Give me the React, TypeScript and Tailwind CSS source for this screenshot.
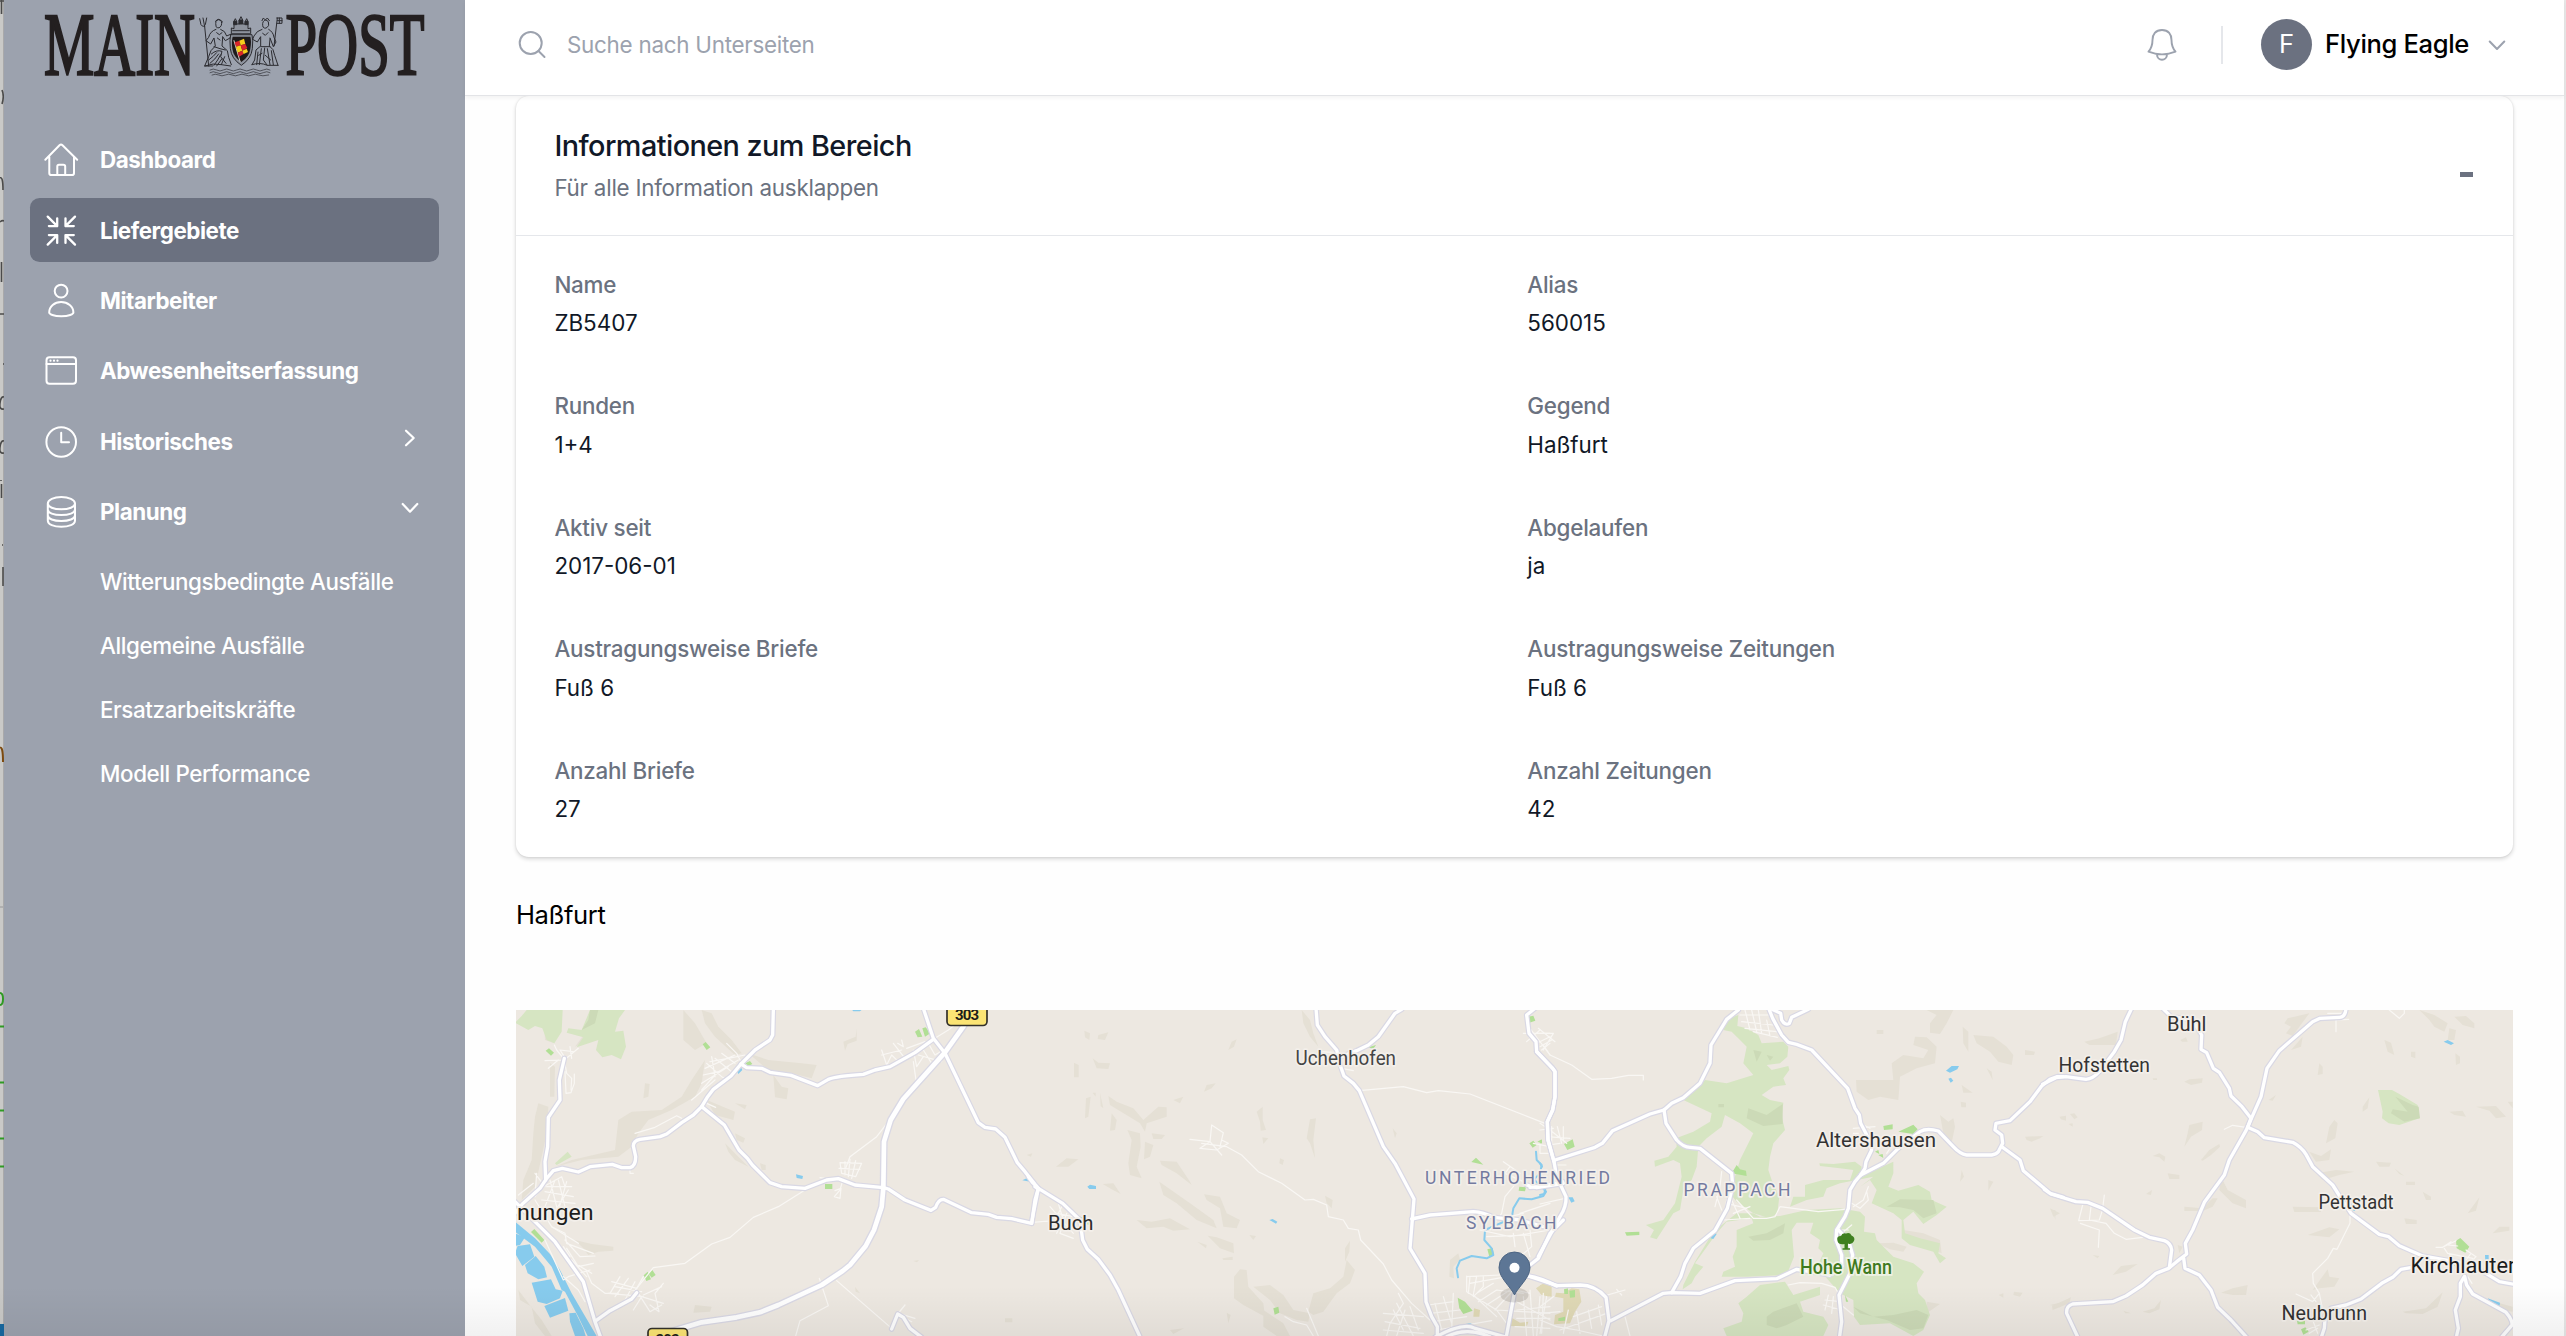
import React from "react";

type Tile = { x: number; hill: string[]; forest: string[]; dark: string[]; park: string[]; sand: string[]; water: string[]; stream: string[]; minor: string[]; road: string[]; highway: string[] };

/* Map geometry, split in four sheets. Each sheet is drawn at three units to the pixel. */
const tiles: Tile[] = [
  {
    x: 515,
    hill: [
      "M85 30H120L118 130L90 120ZM240 30L270 60L290 50L250 110L180 140L210 100Z",
      "M505 30L540 70L575 130L540 150L505 120ZM560 30L590 40L610 80L650 120L680 160L660 165L600 110L570 70Z",
      "M570 180L560 250L540 290L470 330L400 360L370 400L350 440L310 470L200 480L120 500L170 480L300 450L310 360L350 335L440 330L500 290L530 240Z",
      "M70 310L100 320L95 400L80 470L60 560L20 600L25 540L50 480L55 400L60 350Z",
      "M700 160L760 180L860 190L905 195L890 235L830 220L760 210ZM775 225L800 260L820 265L815 298L780 292Z",
      "M985 125L1022 110L1025 85V122L998 132L990 152ZM390 250L404 252L400 290L385 295Z",
      "M575 300L660 335L655 360L620 350L600 345ZM630 430L680 480L700 500L660 480L640 455ZM660 400L690 415L685 428L665 420ZM735 490L752 495V510H740ZM660 310L695 315L690 328Z",
      "M180 720L230 732L295 740V752L250 755L220 765L205 745ZM540 915L590 920L585 935L535 938Z",
      "M10 870L40 910L80 960L110 1008H90L60 970L50 920L15 900ZM105 190L120 200L118 290H105Z",
      "M1535 465L1552 460L1548 470ZM1195 783L1212 780L1206 787ZM1020 860L1035 880L1022 875ZM1470 955H1492V967H1470ZM1455 802L1468 812Z",
    ],
    forest: ["M0 68L20 48L35 30H143L140 95L118 130L95 120L82 85L60 78L40 90Z", "M225 30H330L312 55L300 95L325 92L333 140L318 178L290 165L262 172L243 150L250 120L185 142L205 112L155 98L160 85L200 90Z", "M120 490L158 455L170 470L125 495Z"],
    dark: ["M225 30H250L240 70L200 90L220 60Z"],
    park: ["M92 152L102 145L117 158L108 167ZM563 133L572 126L586 142L575 150ZM1200 95L1212 87L1222 110L1208 112ZM1222 85L1232 82L1246 100L1230 110ZM930 552H952V567H930ZM48 696L58 687L88 720L80 728ZM386 826L398 815L408 838L394 843ZM400 820L412 810L422 825L410 833ZM690 190L705 183L712 192L700 198Z"],
    sand: [],
    water: [
      "M0 665L60 715L105 762L135 810L170 880L205 940L245 1008H218L190 950L150 875L140 870L110 800L60 740L0 695Z",
      "M0 700L30 712L15 735L0 738ZM8 738L45 733L58 770L22 798L0 760Z",
      "M30 795L62 768L88 800L96 832L70 838L38 820Z",
      "M50 848L108 838L122 868L143 872L135 895L95 912L68 905Z",
      "M88 918L150 894L160 932L105 953Z",
      "M163 940L182 938L205 985L212 1008H180L165 965Z",
      "M665 212L678 202L682 210L670 222ZM843 523L864 528L862 537L845 534ZM1010 28H1042L1035 34H1015ZM1522 541L1538 533L1545 545Z",
    ],
    stream: [],
    minor: [
      "M118 135L125 150L148 178M90 182L148 180L190 145M100 205L130 180M165 140L170 175M148 170L135 150L175 155M150 215L153 280L168 278L178 250V222M148 180L155 220L170 235L168 270",
      "M575 190L620 230L640 240M600 175L650 215M570 205L660 165M565 225L610 215L670 180M590 170L600 230M620 160L660 190M560 250L640 200M530 300L600 240M635 130L665 160L680 190M560 270L600 225M585 185L640 175L690 165",
      "M360 400L420 382L485 347L500 355M575 310L602 322M1130 352L1085 410L1005 470L992 505",
      "M1100 150L1115 195L1130 165L1150 185M1100 165L1160 150M1135 130L1170 175M1160 120L1165 140L1148 130M1175 145L1230 125M1195 150L1205 200L1225 170M1225 150L1250 190M1210 165L1280 185M1255 118L1300 90L1345 55M1195 185L1203 240M1240 130L1260 165L1285 150",
      "M975 488L1040 490L1022 530L980 520ZM990 485V525M1005 478L1000 530M1022 482L1010 535M972 505L1035 508M985 535L975 570L958 590L975 595L978 565L960 572M915 533L960 540",
      "M870 570L790 620L715 652L645 712L590 732L510 790L415 803L365 865L350 890",
      "M290 845L365 865M315 830L285 880M340 835L300 890M280 880L385 890M300 860L380 875M360 845L330 900M385 830L340 910M445 850L420 880L432 935L405 915M355 930L380 890L445 910M370 880L405 935L440 915M385 885L440 860",
      "M85 560L140 530L150 560M75 570L60 590L65 520M60 520L90 560M10 585L55 550M95 560L170 560M90 575L175 590M80 600L180 610M105 540L130 640M130 540L150 620M155 545L125 650M60 600L110 680L190 730M160 570L110 650M120 540L90 620",
      "M110 680L150 700L155 730L235 760M150 720L195 770L240 768M155 745L190 800L235 790M170 780L215 830M145 740L165 770M90 720L145 840L160 830L225 810M215 815L230 850L270 880L310 880M145 830L190 870L210 905M180 790L230 820",
      "M965 842L1130 985M913 835L940 917L855 962L842 1008M1148 942L1170 915M1150 940L1200 955M1160 950L1190 965M345 505V520H355",
    ],
    road: [
      "M775 30L773 105L765 120L720 150L678 192L648 228L595 268L578 290L560 320L535 345L500 368L455 402L435 410L375 418Q355 422 355 438L362 470Q362 498 345 503L320 503L292 493L225 500L190 516L142 505L115 512L95 535L75 565L22 612L0 640",
      "M148 175L133 240L135 300L100 352L98 440L90 485L92 540",
      "M678 192L695 203L740 205L765 217L828 226L908 257L940 238Q965 228 1045 223L1080 210L1125 200L1200 158L1255 118",
      "M1225 25L1255 115L1290 160L1390 368L1410 382L1442 387L1470 412L1507 488L1530 515L1560 553L1570 565",
      "M560 320L628 375L672 450L698 476L712 495L765 548L800 560L870 565L935 540L970 536L1020 555L1105 563L1120 567L1170 600L1248 631L1262 622Q1270 598 1285 598L1370 638L1420 643L1445 652L1490 656L1550 670L1560 600L1570 565",
      "M0 605L120 725L205 845L218 890L240 965L258 1015",
      "M365 878L350 897L285 932L243 962",
      "M1130 987L1148 942L1165 952L1185 985L1220 1012",
    ],
    highway: ["M1375 25L1345 80L1290 157L1165 297L1127 360L1107 425L1105 565L1100 620L1077 690L1052 738L1005 795L983 813L920 855L790 915L735 937L665 952L560 967L500 985L400 1015"],
  },
  {
    x: 1030,
    hill: [
      "M163 92L180 100L178 120L165 112ZM205 105L235 97L225 120L203 117ZM188 175L205 188L240 190L235 207L200 205ZM132 188L146 195V232H132ZM168 295L182 290L175 350L165 355ZM210 278L220 325L212 318ZM188 278H197V290Z",
      "M235 288L260 305L310 325L340 360L385 320L410 322V350L350 370L345 395L330 370L240 315ZM245 340L260 360L255 390L240 392ZM292 390L330 400L332 440L320 500L335 535L300 525L295 490L305 420Z",
      "M345 425L370 435L360 470L342 478ZM365 400L405 405L395 417H370ZM390 482L440 485L480 545L485 555L440 520L395 495ZM388 545L480 610L550 660L560 685L500 660L440 610L400 585Z",
      "M522 583L570 590L590 640L630 660L620 685L580 680L570 625L530 600ZM218 552L250 550L272 582L245 568ZM78 500L110 475L145 478L115 500ZM320 660L365 665L420 655L480 688L430 692L400 680L350 685Z",
      "M533 707L560 712L610 730L612 760L570 745ZM502 725L530 735L528 745ZM577 775L608 770V780H580ZM680 335L698 320V360L708 390L692 392L690 365ZM840 358L858 355L850 420L855 475L840 430L830 415ZM697 412L715 415L700 432ZM750 475L762 480L758 495L748 490Z",
      "M815 30L840 60L850 100L865 140L840 110L820 70ZM522 275L530 255L557 250L545 265ZM430 300L460 290L450 310ZM1088 385L1100 400L1095 415ZM885 587L908 600L905 625L890 610ZM595 150L605 125L620 118L612 140Z",
      "M612 830L630 808L650 810L655 860L700 910L705 950L640 915L612 895ZM670 860L720 855L760 885L790 930L840 940L835 965L800 960L750 940L720 900ZM700 930L760 970L780 1008H740L700 980Z",
      "M835 935L850 880L900 865L940 830L950 780L975 810L960 850L920 880L880 935L850 945ZM945 745L960 722L958 755L945 785ZM658 705L678 708L670 720ZM1260 780L1285 760L1290 780L1270 800L1272 835L1258 830ZM590 938L602 945L595 970ZM420 990L462 985L430 1002Z",
    ],
    forest: [],
    dark: [],
    park: ["M1498 430L1510 422L1520 435L1508 443ZM1522 425L1535 418V430ZM1468 560L1488 562L1485 574L1466 572ZM1324 486L1338 473L1360 494ZM1495 50L1510 47L1516 62L1498 68ZM730 925L745 920L748 938L734 944ZM1372 748L1388 744L1392 765L1378 770ZM1283 893L1305 905L1328 932L1300 942L1288 925ZM1015 142L1038 135L1030 147ZM150 650L175 655L180 675L155 670Z"],
    sand: ["M1332 925L1350 930L1348 950H1330ZM1440 950L1470 968L1495 965L1490 980L1440 978ZM1518 865L1540 850L1565 855V890L1535 885Z"],
    water: ["M172 560L180 554L198 558V567H178ZM718 660L728 657L742 665L738 671Z"],
    stream: ["M1518 455L1520 480L1535 495L1530 520L1512 538L1548 575L1540 588L1505 598L1468 595L1450 625L1445 655L1365 690L1363 720L1385 745L1390 765L1370 775L1325 768L1290 782L1280 805L1284 832", "M1282 980L1322 972"],
    minor: [
      "M988 272L1120 260L1190 278L1225 272L1320 282L1545 370M480 418L540 425L510 445L560 450L595 430L575 420M545 375L580 398L570 440M545 375L540 425L575 465M515 430L590 440L635 465L685 515L755 550L825 600L850 598L890 615L895 650L940 660L955 685L985 690L992 720L1060 792L1085 840L1145 910L1200 960",
      "M85 610L100 660L80 700M80 640L130 650M95 620L60 690M110 640L90 700L130 715M0 668L90 660M60 620L130 700",
      "M1105 880L1120 910L1080 970L1070 1008M1060 940L1180 950M1065 965L1170 985M1060 990L1180 1000M1100 910L1150 1008M1125 930L1100 1008M1090 930L1120 990M1140 920L1165 990",
      "M1195 915L1270 905M1200 940L1290 930M1210 965L1310 950M1215 910L1235 990M1240 890L1265 970M1270 880L1265 990M1220 990L1385 962",
      "M1310 828V875L1400 930L1560 940M1310 830L1410 825M1320 830L1315 880M1340 828L1330 885L1400 950M1360 830V860L1330 890M1320 850L1430 830M1345 905L1400 870L1480 880M1370 915L1440 870M1395 930L1450 870M1340 880L1390 850M1400 930L1430 970",
      "M1460 905L1560 960M1480 890L1490 1008M1500 870L1510 1008M1530 890L1520 1008M1460 930L1560 920M1455 980L1560 985M1540 880L1535 1000M1455 870L1500 880M1460 955H1560",
      "M1420 485L1470 520L1450 560L1425 590L1415 640L1380 690M1440 500L1425 520L1480 545L1500 560M1350 690L1440 710L1560 690M1370 710L1500 705M1450 700L1455 740M1480 700L1500 770M1500 690L1505 740L1470 770M1470 640L1560 610M1440 650L1480 640",
      "M1480 100L1560 100M1500 85L1560 165M1490 125L1530 90M1520 130L1560 110M1535 150L1560 130M935 205L970 212M870 155L920 158M1530 435V460H1560M1510 430L1560 440M765 950L790 965L830 975L850 1008M830 925L865 1008",
    ],
    road: [
      "M15 560L25 567M-5 530L8 548L25 565L98 610L150 660L158 720L172 748L205 778L240 825L265 870L332 1015M25 565L10 640L5 670",
      "M858 25L862 75L885 110L920 150L932 200L942 228L970 250L988 272L1060 440L1095 490L1152 597L1140 745L1185 820L1188 905L1205 950L1222 980V1015",
      "M1115 28L1095 40L1045 110L1015 135L980 152L935 170",
      "M1145 657L1200 645L1330 635Q1360 637 1390 652L1470 660L1540 680",
      "M1515 25L1490 45L1497 100L1518 125L1520 155L1568 205L1575 215V290L1568 330L1552 365L1554 420L1572 485",
      "M1490 555L1520 563L1600 550",
      "M1600 660L1560 700L1525 775L1500 795",
      "M1452 885L1428 1015",
      "M1495 828Q1530 833 1580 858",
      "M1215 1012Q1300 965 1335 985L1430 1012M1250 1010Q1310 980 1380 1010",
    ],
    highway: [],
  },
  {
    x: 1540,
    hill: [
      "M1160 30H1240L1220 70L1200 102L1170 98V70L1190 45ZM1125 110L1160 112L1190 140L1185 190L1130 205L1080 230L1075 300L1020 290L985 300L950 275L948 240L975 240L1060 240L1055 190L1090 165L1150 175L1165 150L1120 135Z",
      "M1300 105L1360 110L1400 140L1420 165L1415 195L1375 185L1350 155L1310 130ZM1268 80L1285 95V155L1270 130ZM1455 150L1485 155L1482 165H1455ZM1265 255L1298 278H1270ZM1340 205L1355 215L1358 240ZM1200 345L1225 365L1240 355L1245 380L1235 428L1210 400ZM1262 305L1278 308V322H1264Z",
      "M1010 90H1030V102H1010ZM1455 410L1510 408L1500 415L1475 425L1460 420ZM1345 540L1360 545L1345 572ZM1265 510L1272 530L1260 545ZM1530 625L1560 640L1540 650Z",
      "M1010 730L1060 728L1100 740L1090 755L1050 748ZM1090 690L1150 700L1200 720L1205 760L1180 750L1130 725L1095 720ZM1422 875L1448 878L1440 890L1420 885ZM1376 885L1390 880V893ZM1160 905L1200 912L1160 940ZM1530 915L1560 908V922Z",
    ],
    forest: [
      "M595 45L592 78L620 85L655 105L665 130L730 125L745 140L742 170L720 190L680 195L695 210L745 198L748 210L730 235L738 255L700 260L665 285L690 300L730 308L725 350L735 390L700 430L690 470L685 510L695 540L718 590L712 640L690 655L640 640L590 605L570 580L600 480L640 400L600 370L555 345L545 380L500 415L475 440L470 500L455 540L430 570L420 630L400 640L350 718L330 712L342 690L318 675L370 660L405 610L425 530L420 490L400 480L345 500L343 482L385 470L410 440L408 415L460 395L510 365L515 340L430 300L495 240L560 250L640 225L610 190L620 140L600 120L575 95L550 90L560 58Z",
      "M838 490L880 492L945 485L965 500L960 530L1060 485L1060 520L1045 560L1075 572L1135 555L1170 575L1175 600L1220 620L1190 645L1150 672L1120 635L1090 660L1095 700L1140 715L1200 730L1195 760L1218 775L1200 790L1180 755L1110 735L1085 715L1085 660L1060 640L995 610L1010 570L990 540L960 560L1000 530L900 550L860 565L850 590L800 600L750 620L760 590L795 590L795 555L850 540L930 540L940 510L900 505L840 498Z",
      "M720 648L800 630L900 625L960 635L975 650L972 695L1005 700L1010 720L1060 770L1120 790L1152 815L1130 850L1135 880L1155 900L1170 945L1150 990L1120 1008L1050 970L960 975L942 950L940 900L900 880L860 835L838 785L850 760L835 745L840 720L810 700L820 668L770 668L755 690L762 770L740 825L620 830L545 830L550 815L585 800L578 770L590 740L590 690L640 670L635 655L560 665L530 700L465 790L490 800L465 830L455 850L428 868L430 855L465 785L520 695L590 640L640 640L660 650Z",
      "M550 985L605 965L610 940L595 910L620 890L660 855L735 845L760 885L840 860L840 885L780 905L790 935L850 950L865 975L850 1008H560Z",
    ],
    dark: [
      "M625 325L680 345L728 312V372L670 378L620 355ZM625 710L680 700L735 670L730 700L690 720L640 722ZM680 950L700 935L770 910L790 950L740 975L710 985L680 975ZM940 920L1000 950L1060 945L1130 930L1165 945L1150 985L1110 990L1040 960L960 940Z",
      "M1040 620L1080 598L1180 600L1190 640L1150 655L1120 630L1080 622ZM535 312H552V322H535ZM640 150L665 155L650 185ZM680 165L700 170L690 182Z",
    ],
    park: ["M72 432L98 418L104 440L82 450ZM255 697L298 695V705L260 707ZM575 520L590 495L600 508L618 512L620 528ZM1030 378L1058 373V388L1032 390ZM1075 395L1120 374L1133 388L1120 402ZM1005 455L1015 450L1018 462ZM1015 465L1028 462L1030 474ZM72 868L84 865V882H73ZM88 872L105 870V892L90 893ZM55 955L75 950V962L55 963ZM915 885L925 905H918ZM0 420H6V430H0Z"],
    sand: ["M95 865L118 868L124 905L105 935L90 970L42 973L45 945L70 935V895L45 890L48 878L70 880ZM0 855L32 855L25 890L0 880Z"],
    water: ["M1218 212L1235 198L1257 198L1252 208L1230 218ZM1225 236L1233 233L1240 242L1232 248ZM85 592L98 592L104 604L94 608ZM512 715L522 698L530 702L520 717Z"],
    stream: ["M0 585L12 582L16 570M0 490L6 500"],
    minor: [
      "M-10 100L40 100L10 150M-5 85L45 125M10 135L30 165L95 195L155 238L215 235L265 226H310V240M0 140L35 120",
      "M600 45L690 45M605 65L700 75M615 85L710 95M640 95L712 112M615 30L630 90M635 30L650 95M655 30L665 100M680 60L690 108",
      "M0 370L30 390L80 430M35 380V430M52 380L65 430M20 410L90 415M25 435L60 430M45 495H78M0 612L75 595M70 380V420M0 390L40 385",
      "M545 515L540 560L525 620M560 600L550 660L630 655M575 600L600 655M590 600L640 655L680 655L705 650L720 620L835 635L915 628M530 590L545 630M560 610L620 625M580 640L630 620",
      "M985 560L970 600L940 620M980 575L985 600L960 625L935 610M905 700L935 675M905 690L925 690M940 385L1005 380M955 400L940 400M0 940L60 935M0 960L50 980L110 990L190 1008M20 890L0 1000M110 935L120 1000M145 930L155 985M175 915L185 975M100 950L185 920M60 990L200 940M185 890L255 870M230 868L245 885M255 950L270 1008M85 930L70 1000",
      "M745 855L780 848L845 850L885 862L895 880M865 885L855 930M880 890L875 940M855 900L900 905M850 915L905 930M910 920L940 945M905 890V930M1060 430L1040 460M960 370L990 385M0 920L40 890",
    ],
    road: [
      "M-10 155L38 205L45 215V290L38 330L22 365L24 420L42 485L50 530L78 590Q80 620 60 650L-5 770",
      "M-30 562L0 560L68 545",
      "M-35 828L52 857L120 855Q165 855 198 892L207 962L193 1015",
      "M45 480L165 442L187 430L218 392L330 342L372 330L395 310L430 293L480 250L510 190L513 135L560 58L595 30",
      "M372 330L378 370L410 420Q430 442 450 442L480 445L575 520L578 560L562 625L525 692L460 745L435 790L422 830L395 878",
      "M212 962L370 880L395 878L480 880L585 842L710 836L770 808L870 825L905 798",
      "M686 25L698 55L725 105L745 127L770 133L815 150L923 265L945 325L958 345L962 370L988 420L995 450L978 485L975 505L962 525",
      "M1075 445L1030 490L962 525L945 545L930 570L925 625L915 650L890 690L888 720L905 765L905 800",
      "M690 25L722 40L725 60Q735 78 748 70L755 52L805 28",
      "M895 690L925 720L938 765L930 820L897 885L905 965L898 1015",
      "M1075 445L1140 395Q1160 383 1195 393L1240 440Q1260 462 1280 465L1355 465Q1370 462 1375 455L1388 430L1385 405L1365 390L1368 370L1410 362L1470 305L1505 258L1530 238L1552 230H1570",
      "M1385 440L1440 480L1450 512L1530 580L1570 592",
    ],
    highway: [],
  },
  {
    x: 2046,
    hill: [
      "M115 125L160 115L215 95L210 135L130 135ZM403 120L420 112L425 125H408ZM415 245L430 238L470 235L468 248L435 255ZM320 235H333V240H322ZM40 350L60 347V362L45 358ZM72 342L85 340L95 352L85 358ZM68 372L80 370V380Z",
      "M725 55L790 40L760 80L740 108L720 100L735 80L715 70ZM770 110L765 140L735 150ZM1120 30L1165 45L1205 70L1195 95L1165 80L1150 60ZM1210 85L1230 90L1225 120L1205 120ZM1225 50L1260 48L1285 70V85L1250 75ZM1015 120L1035 128L1045 165L1025 155ZM1228 160L1242 170V190L1230 195ZM1095 155L1108 155V175L1095 170ZM820 190L830 200V222L815 225Z",
      "M415 440L425 400L430 375L470 365L468 390L435 410ZM465 480L490 450L520 432L522 440L495 465L470 482ZM320 468L340 460L358 470L355 485L340 472ZM525 530L545 570L600 600V625L560 610L520 570ZM365 520L400 525V537H370ZM300 582L318 570L315 585ZM415 620L470 625L500 595H515L500 620L470 633H415Z",
      "M840 430L850 380L865 360L875 370L868 415ZM790 455L825 468L855 448L850 480L810 485ZM810 520L870 510L925 515L880 525L830 540ZM990 485L1035 488L1030 500H1000ZM1045 505L1075 528L1060 522ZM950 320L970 292L965 325L950 335ZM668 300L690 285L680 302ZM1130 575L1155 590V600H1140ZM1265 640L1300 592L1290 632ZM740 620L825 622V636H745ZM785 705L850 682L880 688L850 712Z",
      "M525 878L560 865L605 855L600 885L560 885ZM200 825L225 798L275 792L240 815ZM18 918L75 892L70 910L20 930ZM800 870L845 808L850 830L880 835L865 860L820 865ZM1070 935L1140 925L1190 877L1175 920L1130 942L1080 940ZM1340 700L1360 680L1390 680V692ZM1210 335L1250 332L1260 350L1225 345ZM1290 320L1350 318L1380 350L1350 355L1330 332ZM1385 305H1400V325Z",
      "M232 932L255 940H238ZM290 935L325 925L345 900L340 928L310 940ZM395 735L410 740L400 760ZM140 765L160 768L155 775ZM20 630H28V660ZM1080 545H1107V555H1080ZM1075 655L1112 660V672H1080ZM1345 905L1400 920V935L1360 928Z",
    ],
    forest: ["M996 270H1038L1060 282L1115 315L1120 355L1060 375L1028 370L1008 355L1010 335Z"],
    dark: ["M1048 290L1100 315L1118 320L1122 355L1075 365L1035 340L1040 328L1085 335Z"],
    park: ["M1230 722L1243 714L1270 740L1258 758L1232 745ZM753 962H777V973H755ZM765 988L778 982L788 995L772 1004ZM1225 795L1240 800L1230 808Z"],
    sand: ["M1232 735L1248 740L1240 752Z"],
    water: ["M1193 125L1205 120L1224 130L1215 135ZM1317 765H1328V785L1318 788ZM1325 895L1362 908L1360 922L1335 912Z"],
    stream: ["M925 630L905 600"],
    minor: [
      "M535 388L560 376L605 383M175 585L170 625M110 615L98 662L160 660L170 628M135 620L130 660L180 670L205 700L240 718L290 712M103 670L160 690L157 742M1030 30L1060 55L1075 40V30M870 55V95M870 60L908 58M845 40H890",
      "M912 645V670L873 748L862 745L845 775L800 820L802 850L820 880L832 940M750 882L800 905L820 880M795 885L810 905M1170 742H1190L1230 722M1190 742L1215 725M1195 745L1205 760L1280 775M1210 760L1215 785M1260 750L1290 770M1275 760L1260 780M1205 735L1235 738M1290 770L1270 790M1265 830L1278 850",
      "M800 960L815 1000M780 990L820 975M790 1000L815 985",
    ],
    road: [
      "M-10 253L30 233L60 230L120 238Q140 237 160 215L205 155L225 120L238 65L257 25",
      "M350 25L375 50L440 60L467 105L465 148L482 158L502 205L520 217L550 265L555 288L588 320L615 355L605 382",
      "M900 25Q898 52 880 52L822 55L800 65L700 152L663 205L645 290L600 392L550 480L535 525L475 607L440 690L418 730L422 762L392 785L368 805L330 820L290 855L240 888L200 905L80 912Q60 918 62 940L97 1015",
      "M605 382L635 395L655 413L740 427Q765 440 780 463L800 500L860 555L882 590L915 640L1000 703L1028 710L1060 737L1130 768L1210 782L1255 790L1320 820L1360 845L1405 853",
      "M-5 568L15 582L90 605L125 607L170 625L265 690L310 712L355 722Q375 730 377 750L370 803",
      "M413 775L417 805L460 825L495 870L515 922L555 960L605 1015",
      "M1110 800L1065 808L1040 832L1010 848L945 897L900 915L855 925",
      "M838 945L835 985L825 1015",
      "M1255 830L1243 850V890L1228 930L1237 985L1230 1015",
      "M1256 830L1262 855L1280 882L1380 937Q1400 960 1398 975L1368 1010",
    ],
    highway: [],
  },
];

const layer = (key: keyof Omit<Tile, "x">, props: React.SVGProps<SVGPathElement>) =>
  tiles.map((t) => (
    <g key={t.x} transform={`translate(${t.x} 1000) scale(0.333333)`}>
      {t[key].map((d, i) => (
        <path key={i} d={d} strokeLinejoin="round" strokeLinecap="round" {...props} />
      ))}
    </g>
  ));

const places = [
  { t: "nungen", x: 517, y: 1219.5, w: 76.5, s: 22.5, c: "#1c1c1c" },
  { t: "Uchenhofen", x: 1295.5, y: 1064.5, w: 100.5, s: 20, c: "#444444" },
  { t: "Buch", x: 1048, y: 1230, w: 45.5, s: 20.5, c: "#2c2c2c" },
  { t: "Altershausen", x: 1816, y: 1147, w: 120, s: 20.5, c: "#333333" },
  { t: "Hofstetten", x: 2058.5, y: 1072, w: 91.5, s: 20, c: "#333333" },
  { t: "Bühl", x: 2167, y: 1031, w: 39.5, s: 20, c: "#333333" },
  { t: "Pettstadt", x: 2318.5, y: 1208.5, w: 75, s: 20, c: "#333333" },
  { t: "Neubrunn", x: 2281.5, y: 1319.5, w: 85.5, s: 20, c: "#333333" },
  { t: "Kirchlauter", x: 2410.5, y: 1273, w: 105, s: 21.5, c: "#1c1c1c" },
  { t: "UNTERHOHENRIED", x: 1425, y: 1183.5, w: 185, s: 17.5, c: "#737a9f", sp: true },
  { t: "SYLBACH", x: 1466, y: 1229, w: 90.5, s: 17.5, c: "#737a9f", sp: true },
  { t: "PRAPPACH", x: 1683.5, y: 1196, w: 107, s: 17.5, c: "#737a9f", sp: true },
];

function MapView() {
  return (
    <svg className="block h-[326px] w-full" viewBox="516 1010 1997 326" preserveAspectRatio="none">
      <rect x="516" y="1010" width="1997" height="326" fill="#ede8e1" />
      {layer("hill", { fill: "#e5e0d5" })}
      {layer("forest", { fill: "#d6e5c2" })}
      {layer("dark", { fill: "#ccdab7" })}
      {layer("sand", { fill: "#e0d9b6" })}
      {layer("park", { fill: "#b1df95" })}
      {layer("water", { fill: "#87cbed" })}
      {layer("stream", { fill: "none", stroke: "#87cbed", strokeWidth: 6 })}
      {layer("minor", { fill: "none", stroke: "#f9f7f4", strokeWidth: 3.6 })}
      {layer("road", { fill: "none", stroke: "#d9d8e4", strokeWidth: 17 })}
      {layer("highway", { fill: "none", stroke: "#d9d8e4", strokeWidth: 22 })}
      {layer("road", { fill: "none", stroke: "#ffffff", strokeWidth: 10 })}
      {layer("highway", { fill: "none", stroke: "#ffffff", strokeWidth: 14 })}
      <g fontFamily="Roboto, 'Liberation Sans', sans-serif" fontWeight="400">
        {places.map((p) => (
          <text key={p.t} x={p.x} y={p.y} fontSize={p.s} fill={p.c} textLength={p.w} lengthAdjust={p.sp ? "spacing" : "spacingAndGlyphs"} stroke="#f3efea" strokeWidth="3.5" strokeLinejoin="round" paintOrder="stroke">
            {p.t}
          </text>
        ))}
        <text x="1800" y="1274" fontSize="19.5" fontWeight="500" fill="#3f7a20" textLength="92" lengthAdjust="spacingAndGlyphs" stroke="#eef2e4" strokeWidth="3.5" paintOrder="stroke">
          Hohe Wann
        </text>
      </g>
      {/* nature reserve tree */}
      <path d="M1837.500 1241 Q1836 1236 1841 1236 Q1842 1232.500 1846 1233.500 Q1850 1232 1851.500 1235.500 Q1855.500 1237 1854 1241 Q1851.500 1245.500 1848 1243.500 L1847.800 1248.300 H1850 V1249.800 H1842.500 V1248.300 H1844.500 V1244 Q1838.500 1245 1837.500 1241Z" fill="#3f8020" />
      {/* road shields */}
      <g fontFamily="Roboto, sans-serif" fontWeight="700" fontSize="15" fill="#1e1e1a" textAnchor="middle">
        <rect x="947" y="1001" width="40" height="24.500" rx="4" fill="#fbe474" stroke="#33312a" strokeWidth="1.700" />
        <text x="967" y="1020" textLength="24" lengthAdjust="spacing">303</text>
        <rect x="648" y="1328.500" width="39.500" height="24" rx="4" fill="#fbe474" stroke="#33312a" strokeWidth="1.700" />
        <text x="667.500" y="1344.500" textLength="24" lengthAdjust="spacing">303</text>
      </g>
      {/* marker */}
      <ellipse cx="1514.500" cy="1295" rx="14" ry="7.500" fill="#55504a" opacity=".18" />
      <path d="M1514.500 1295 C1511 1287 1499 1278 1499 1267.500 A15.500 15.500 0 0 1 1530 1267.500 C1530 1278 1518 1287 1514.500 1295Z" fill="#5d7695" stroke="#4d6583" strokeWidth="1" />
      <circle cx="1514.500" cy="1267.700" r="5" fill="#fff" />
    </svg>
  );
}

function Logo() {
  return (
    <svg className="block h-[68px] w-[392px]" viewBox="40 12 392 68">
      <g fontFamily="'Liberation Serif', serif" fontSize="88" fill="#231f20" stroke="#231f20" strokeWidth="2.400">
        <text x="44" y="74" textLength="151" lengthAdjust="spacingAndGlyphs">MAIN</text>
        <text x="285.500" y="74" textLength="139" lengthAdjust="spacingAndGlyphs">POST</text>
      </g>
      <g transform="translate(190 10) scale(.333333)" fill="none" stroke="#2b2b30" strokeWidth="3" strokeLinecap="round" strokeLinejoin="round">
        {/* trident */}
        <path d="M29 26L33 44Q40 54 46 44L50 24M39 24L44 50M44 50L56 168" />
        {/* left figure */}
        <path d="M78 48Q74 30 86 28Q98 32 94 46Q88 58 80 52ZM76 34Q86 22 98 36M78 58Q60 64 56 82L48 92L62 102L72 84L76 108Q60 120 56 140L44 168H68M92 58Q106 62 110 78L124 72L120 84L106 92L98 80M98 82L96 108L112 122L116 142L124 164M72 110L90 116L106 120M64 132Q80 118 96 124L92 140L108 160M56 150Q70 140 80 128M60 160Q76 148 86 132M72 166Q84 150 92 134M80 168L96 146M94 164L104 140M44 168Q70 158 94 164L122 168M80 68L88 74L96 68M82 84L90 90" />
        {/* right figure */}
        <path d="M218 46Q216 32 228 30Q238 32 236 46Q228 60 220 52ZM216 32L220 24L226 30L232 24L238 32M216 58Q200 62 192 78L188 88L202 96L212 80L212 108L198 120L194 150L186 164M236 58Q250 66 252 82L258 96L250 110L240 84M240 86L238 108Q252 116 254 136L264 166M212 110L240 110M204 126L200 164M214 116L208 164M224 114L220 150L232 166M232 116L240 164M244 122L250 164M186 164Q210 156 232 166H264M218 70L226 76L234 68M206 136L216 130M226 136L242 150" />
        {/* staff with banner */}
        <path d="M252 108L262 24M260 24H276V40H261M268 24V40M262 32H276" />
        {/* castle crown */}
        <path d="M124 70V54L132 56V34L136 26L140 34V42H148V30L153 20L158 30V42H166V34L170 26L174 34V56L182 54V70Z" fill="#8d929d" />
        <path d="M132 34H140V44H132ZM148 30H158V42H148ZM166 34H174V44H166Z" fill="#2b2b30" />
        <path d="M128 62H178" />
        {/* shield */}
        <path d="M122 74H186Q190 90 187 116Q184 146 154 166Q124 146 121 116Q118 90 122 74Z" fill="#8d929d" />
        <path d="M128 80H181Q185 94 181 116Q178 140 154 156Q130 140 127 116Q124 94 128 80Z" fill="#1f1b1c" stroke="none" />
        <path d="M132 92L150 154" stroke="#d5d3cc" strokeWidth="3" />
        <g stroke="none">
          <path d="M134 97L148 92L152 106L138 110Z" fill="#d9262b" />
          <path d="M148 92L162 86L166 102L152 106Z" fill="#f7cf1d" />
          <path d="M138 110L152 106L157 122L143 128Z" fill="#f7cf1d" />
          <path d="M152 106L166 102L172 114L157 122Z" fill="#d9262b" />
          <path d="M143 128L157 122L161 132L147 140Z" fill="#d9262b" />
          <path d="M157 122L170 116L174 126L161 132Z" fill="#f7cf1d" />
        </g>
        <path d="M60 180Q70 174 80 180T100 180T120 180T140 180T160 180T180 180T200 180T220 180T240 180M60 188Q70 182 80 188T100 188T120 188T140 188T160 188T180 188T200 188T220 188T240 188M66 195Q76 190 86 195T106 195T126 195T146 195T166 195T186 195T206 195T236 195" strokeWidth="2" />
      </g>
    </svg>
  );
}

const Icon = ({ children }: { children: React.ReactNode }) => (
  <svg className="mr-[19px] block h-10 w-10 shrink-0" viewBox="0 0 40 40" fill="none" stroke="white" strokeWidth="2" strokeLinecap="round" strokeLinejoin="round">
    {children}
  </svg>
);

const icons = {
  home: <path d="M4.300 19.700L18.500 5.200Q20 3.700 21.500 5.200L36.200 19.700M8.300 17V33.200Q8.300 35 10.300 35H31Q33 35 33 33.200V17M16.300 34.500V26.500Q16.300 24.700 18 24.700H22.400Q24.200 24.700 24.200 26.500V34.500" />,
  shrink: <path d="M6.700 6.600L16.200 16.100M16.200 8.300V16.100H7.900M34 6.600L24.500 16.100M24.500 8.300V16.100H32.800M6.700 34.600L16.200 25.100M16.200 32.900V25.100H7.900M34 34.600L24.500 25.100M24.500 32.900V25.100H32.800" strokeWidth="2.300" />,
  person: <path d="M26.500 10.100A6.400 6.400 0 1 1 13.700 10.100A6.400 6.400 0 1 1 26.500 10.100ZM8.200 31.600C8.200 25.500 13.500 21.100 20.100 21.100S32.400 25.500 32.400 31.600C32.400 33.200 28 35.300 20.300 35.300S8.200 33.200 8.200 31.600Z" />,
  window: (
    <>
      <rect x="5.500" y="6.200" width="29.500" height="26.500" rx="3" />
      <path d="M5.500 13.100H35" />
      <path d="M9.500 9.700H9.510M13 9.700H13.010M16.500 9.700H16.510" strokeWidth="2.200" />
    </>
  ),
  clock: <path d="M35 20A14.800 14.800 0 1 1 5.400 20A14.800 14.800 0 1 1 35 20ZM20.200 10.800V20.200H28" />,
  db: <path d="M34 11.500C34 15 27.800 17.300 20.300 17.300S6.800 15 6.800 11.500S12.800 5 20.300 5S34 8 34 11.500V28.500C34 32.500 27.800 34.800 20.300 34.800S6.800 32.500 6.800 28.500V11.500M6.800 17.500C6.800 21 12.800 23 20.300 23S34 21 34 17.500M6.800 23.300C6.800 27 12.800 29 20.300 29S34 27 34 23.300" />,
};

type Item = { label: string; icon: React.ReactNode; active?: boolean; open?: boolean };
const nav: Item[] = [
  { label: "Dashboard", icon: icons.home },
  { label: "Liefergebiete", icon: icons.shrink, active: true },
  { label: "Mitarbeiter", icon: icons.person },
  { label: "Abwesenheitserfassung", icon: icons.window },
  { label: "Historisches", icon: icons.clock, open: false },
  { label: "Planung", icon: icons.db, open: true },
];
const sub = ["Witterungsbedingte Ausfälle", "Allgemeine Ausfälle", "Ersatzarbeitskräfte", "Modell Performance"];

const fields = [
  ["Name", "ZB5407"], ["Alias", "560015"],
  ["Runden", "1+4"], ["Gegend", "Haßfurt"],
  ["Aktiv seit", "2017-06-01"], ["Abgelaufen", "ja"],
  ["Austragungsweise Briefe", "Fuß 6"], ["Austragungsweise Zeitungen", "Fuß 6"],
  ["Anzahl Briefe", "27"], ["Anzahl Zeitungen", "42"],
];

export default function App() {
  return (
    <div className="relative flex h-[1336px] w-[2566px] overflow-hidden bg-[#fefefe] font-['Inter','Liberation_Sans',sans-serif]">
      <div className="w-1 shrink-0 bg-[#c9c9c7]">
        <svg className="block h-[1336px] w-1" viewBox="0 0 4 1336" fill="none" stroke="#4b4b4b" strokeWidth="1.600">
          <path d="M3.500 0V1336" stroke="#a9a9aa" strokeWidth="1" />
          <path d="M0 1H4M1.500 0V14M2 90Q4.500 96 2 104M0 178Q3 176 3 190M0 222Q2 220 4 221M1.500 262V270M1.500 270V282M0 314H4M3 364H4M4 397Q1 396 0 403T4 409M4 441Q1 440 0 447T4 453M1 480V481M1.500 484V498M2 545H3M3 567V586" />
          <path d="M0 748Q3 746 3 762" stroke="#7c4a10" strokeWidth="2" />
          <path d="M0 993Q3 993 3 999T0 1005M0 1026.500H4M0 1082.500H4M0 1110.500H4M0 1138.500H4M0 1166.500H4" stroke="#2f9a24" strokeWidth="2" />
          <path d="M0 907H4" stroke="#aaa" />
          <rect y="1324" width="4" height="12" fill="#1768a0" stroke="none" />
        </svg>
      </div>
      <aside className="flex w-[461px] shrink-0 flex-col bg-[#9ca2ae] text-white">
        <div className="pt-3 pl-9">
          <Logo />
        </div>
        <nav className="mt-12 flex flex-col gap-[6.400px] pr-[26px] pl-[26px] text-[22.400px]">
          {nav.map((n) => (
            <div key={n.label} className={n.active ? "flex h-16 items-center rounded-[9.600px] bg-[#6b7180] pl-[11px]" : "flex h-16 items-center rounded-[9.600px] pl-[11px]"}>
              <Icon>{n.icon}</Icon>
              <span className="font-bold tracking-[-0.45px]">{n.label}</span>
              {n.open !== undefined && (
                <svg className="mr-[19px] mb-[7px] ml-auto h-5 w-5" viewBox="0 0 20 20" fill="none" stroke="white" strokeWidth="2.200" strokeLinecap="round" strokeLinejoin="round">
                  <path d={n.open ? "M2.700 6L10 13.700L17.300 6" : "M6 2.700L13.700 10L6 17.300"} />
                </svg>
              )}
            </div>
          ))}
          <div className="flex flex-col gap-[6.400px] pt-[3px]">
            {sub.map((s) => (
              <div key={s} className="flex h-[57.600px] items-center pl-[70px] font-medium tracking-[-0.4px]">
                {s}
              </div>
            ))}
          </div>
        </nav>
      </aside>
      <div className="flex w-[2101px] flex-col border-r-2 border-[#e7e7e7]">
        <header className="relative z-10 flex h-24 shrink-0 items-center border-b border-[#e3e4e7] bg-white pr-[57px] pb-[6px] pl-[53px] shadow-[0_2px_4px_rgba(0,0,0,0.05)]">
          <svg className="h-8 w-8" viewBox="0 0 32 32" fill="none" stroke="#9ca2ae" strokeWidth="2" strokeLinecap="round">
            <circle cx="12.700" cy="14" r="11" />
            <path d="M20.500 22L26.500 28" />
          </svg>
          <span className="ml-[17px] text-[22.400px] tracking-[-0.26px] text-[#9ca2ae]">Suche nach Unterseiten</span>
          <svg className="ml-auto h-9 w-8" viewBox="0 0 32 36" fill="none" stroke="#9ca2ae" strokeWidth="1.900" strokeLinejoin="round" strokeLinecap="round">
            <path d="M16 3C9.500 3 6.500 7.500 6.500 13C6.500 19 5.200 21.500 2.500 24.700Q16 30 29.500 24.700C26.800 21.500 25.500 19 25.500 13C25.500 7.500 22.500 3 16 3ZM11 27.500C11 31 13.500 32.700 16 32.700S21 31 21 27.500" />
          </svg>
          <div className="mr-[38px] ml-[43px] h-[38px] w-[2px] bg-[#e5e7eb]" />
          <div className="flex h-[51px] w-[51px] items-center justify-center rounded-full bg-[#6b7180] text-[25.600px] text-white">F</div>
          <span className="ml-[13px] text-[25.600px] font-medium tracking-[-0.36px] text-black">Flying Eagle</span>
          <svg className="ml-[18px] h-5 w-5" viewBox="0 0 20 20" fill="none" stroke="#9ca2ae" strokeWidth="2" strokeLinecap="round" strokeLinejoin="round">
            <path d="M2.700 6.500L10 14L17.300 6.500" />
          </svg>
        </header>
        <main className="flex flex-col pr-[51px] pl-[51px]">
          <section className="h-[761px] rounded-[12.800px] bg-white shadow-[0_2px_4px_rgba(0,0,0,0.16),0_0_2px_rgba(0,0,0,0.1)]">
            <div className="flex h-[140px] items-center justify-between border-b border-[#e5e7eb] pr-10 pl-[38.400px]">
              <div>
                <h2 className="text-[28.800px] leading-[38.400px] font-medium tracking-[-0.55px] text-[#111827]">Informationen zum Bereich</h2>
                <p className="mt-[6.400px] text-[22.400px] leading-[32px] tracking-[-0.24px] text-[#6b7280]">Für alle Information ausklappen</p>
              </div>
              <div className="mt-[18px] h-[4.500px] w-[13px] bg-[#6b7180]" />
            </div>
            <dl className="grid grid-cols-2 gap-x-[25.600px] gap-y-[51.200px] px-[38.400px] pt-[32.600px] text-[22.400px] leading-[32px]">
              {fields.map(([k, v]) => (
                <div key={k}>
                  <dt className="font-medium tracking-[-0.22px] text-[#6b7280]">{k}</dt>
                  <dd className="mt-[6.400px] text-[#111827]">{v}</dd>
                </div>
              ))}
            </dl>
          </section>
          <p className="mt-[38px] mb-[75px] text-[25.600px] leading-[40px] tracking-[-0.4px] text-black">Haßfurt</p>
          <MapView />
        </main>
      </div>
      <div className="pointer-events-none absolute inset-x-0 bottom-0 z-20 h-[50px] bg-gradient-to-b from-transparent to-black/5" />
    </div>
  );
}
